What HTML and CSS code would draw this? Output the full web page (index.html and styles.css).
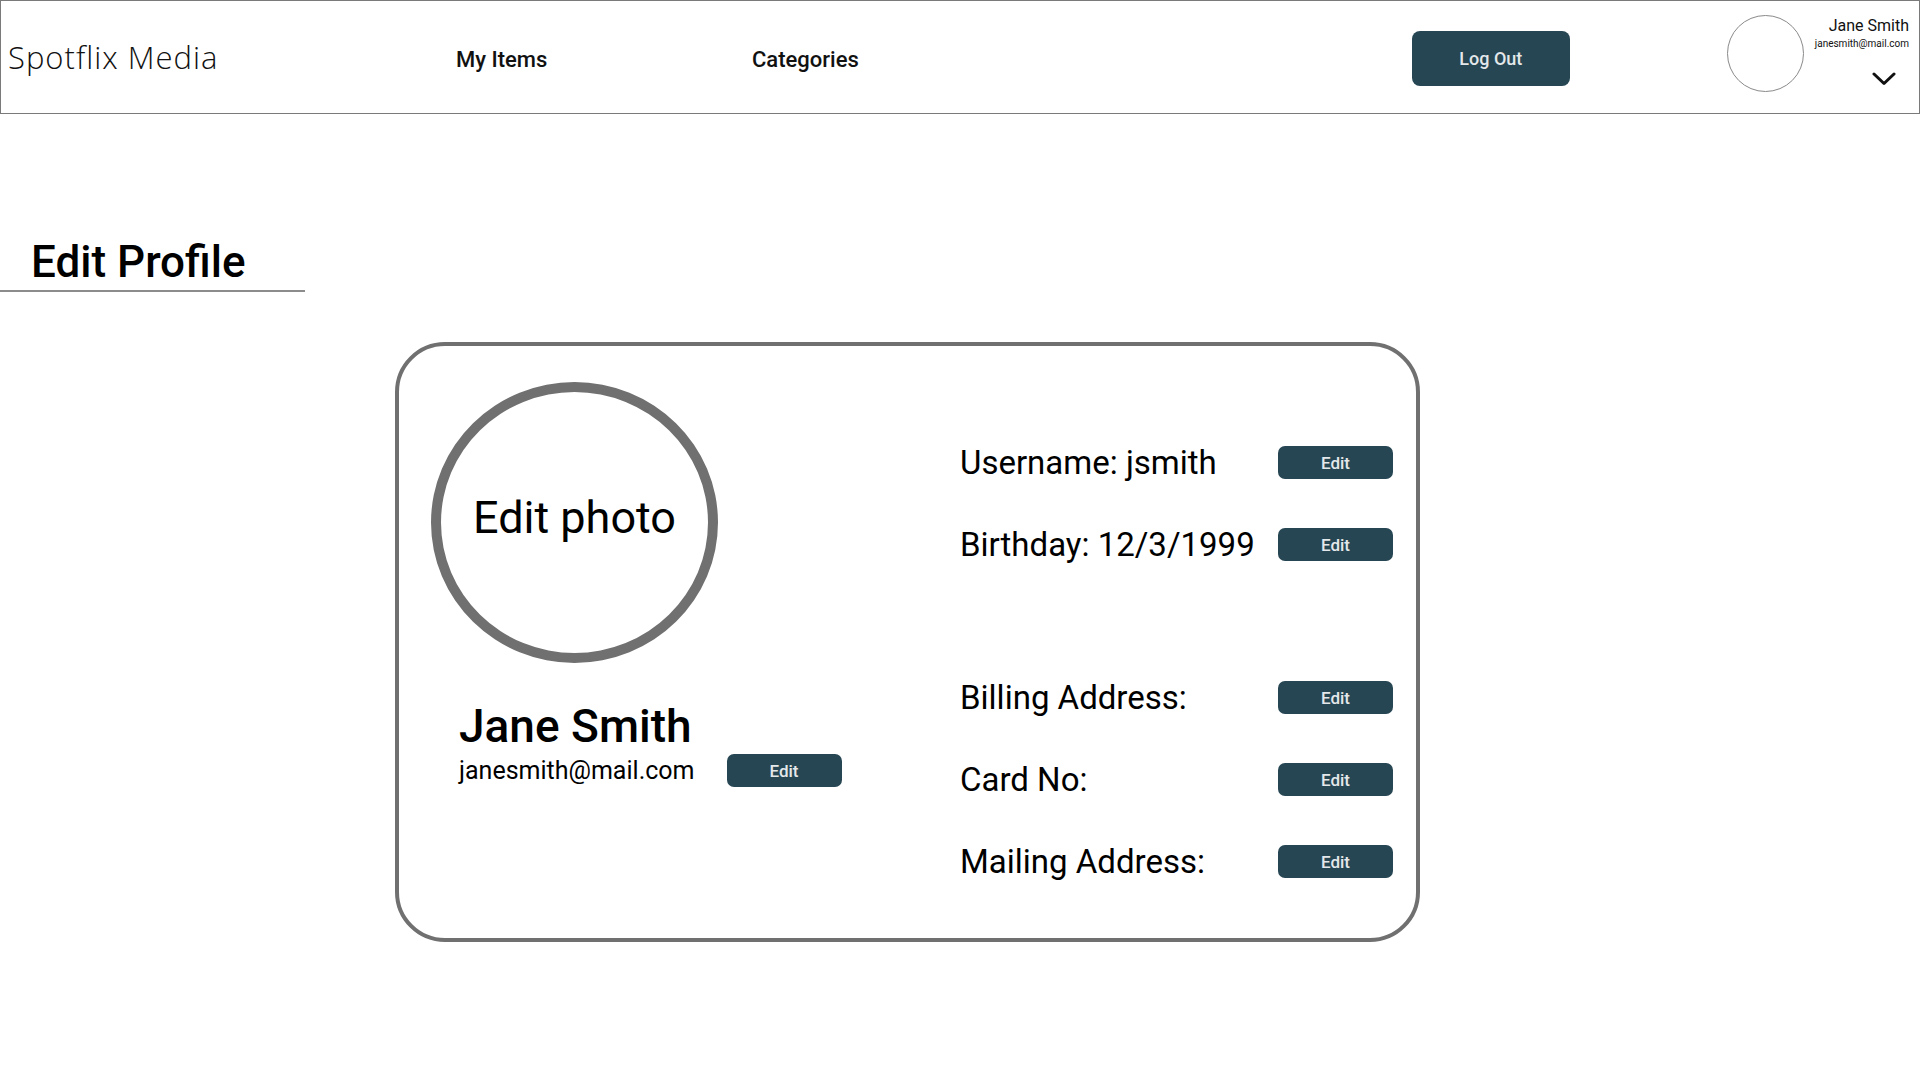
FILE: index.html
```html
<!DOCTYPE html>
<html lang="en">
<head>
<meta charset="utf-8">
<title>Spotflix Media - Edit Profile</title>
<link rel="stylesheet" href="styles.css">
</head>
<body>
<header class="topbar">
  <div class="logo">Spotflix Media</div>
  <nav class="nav">
    <a class="nav-link nav-items" href="#">My Items</a>
    <a class="nav-link nav-cats" href="#">Categories</a>
  </nav>
  <button class="btn btn-logout">Log Out</button>
  <div class="avatar"></div>
  <div class="user">
    <div class="user-name">Jane Smith</div>
    <div class="user-mail">janesmith@mail.com</div>
    <svg class="chevron" width="24" height="14" viewBox="0 0 24 14"><path d="M2 2 L12 11.5 L22 2" fill="none" stroke="#111" stroke-width="3" stroke-linecap="round" stroke-linejoin="round"/></svg>
  </div>
</header>

<main class="main">
  <h1 class="page-title">Edit Profile</h1>

  <section class="card">
    <div class="card-left">
      <div class="photo"><span class="photo-label">Edit photo</span></div>
      <div class="name">Jane Smith</div>
      <div class="mail-row">
        <span class="mail">janesmith@mail.com</span>
        <button class="btn btn-edit">Edit</button>
      </div>
    </div>
    <div class="card-right">
      <div class="field"><span class="field-label">Username: jsmith</span><button class="btn btn-edit">Edit</button></div>
      <div class="field"><span class="field-label">Birthday: 12/3/1999</span><button class="btn btn-edit">Edit</button></div>
      <div class="field field-gap"><span class="field-label">Billing Address:</span><button class="btn btn-edit">Edit</button></div>
      <div class="field"><span class="field-label">Card No:</span><button class="btn btn-edit">Edit</button></div>
      <div class="field"><span class="field-label">Mailing Address:</span><button class="btn btn-edit">Edit</button></div>
    </div>
  </section>
</main>
</body>
</html>
```

FILE: styles.css
```css
* { box-sizing: border-box; }

html, body {
  margin: 0;
  padding: 0;
  background: #ffffff;
  font-family: Roboto, "Liberation Sans", Arial, sans-serif;
  color: #000;
}

.topbar {
  width: 1920px;
  height: 114px;
  border: 1px solid #7a7a7a;
  display: flex;
  align-items: center;
}

.logo {
  font-family: "Open Sans", "Liberation Sans", sans-serif;
  font-weight: 300;
  font-size: 31px;
  letter-spacing: 1px;
  color: #111;
  padding-left: 7px;
  width: 230px;
  white-space: nowrap;
}

.nav {
  display: flex;
  align-items: center;
  margin-left: 225px;
  padding-top: 6px;
}

.nav-link {
  font-size: 22px;
  font-weight: 500;
  color: #111;
  text-decoration: none;
  line-height: 26px;
}

.nav-items { width: 296px; }

.btn {
  font-family: Roboto, "Liberation Sans", sans-serif;
  border: none;
  background: #264653;
  color: #e4e8ea;
  font-weight: 500;
  cursor: pointer;
  padding: 0;
}

.btn-logout {
  width: 158px;
  height: 55px;
  border-radius: 8px;
  font-size: 18px;
  margin-left: 553px;
  margin-top: 3px;
}

.avatar {
  width: 77px;
  height: 77px;
  border-radius: 50%;
  border: 1px solid #8a8a8a;
  margin-left: 157px;
  margin-top: -8px;
}

.user {
  align-self: stretch;
  flex: 1;
  display: flex;
  flex-direction: column;
  align-items: flex-end;
  padding-right: 10px;
  padding-top: 15px;
}

.user-name {
  font-size: 16px;
  line-height: 19px;
  color: #111;
}

.user-mail {
  font-size: 10px;
  line-height: 12px;
  margin-top: 3px;
  color: #111;
}

.chevron {
  margin-top: 22px;
  margin-right: 13px;
}

.main {
  padding-top: 124px;
}

.page-title {
  margin: 0;
  width: 305px;
  padding-left: 31px;
  font-size: 44px;
  font-weight: 500;
  line-height: 49px;
  padding-bottom: 3px;
  border-bottom: 2px solid #8c8c8c;
}

.card {
  margin-top: 50px;
  margin-left: 395px;
  width: 1025px;
  height: 600px;
  border: 4px solid #707070;
  border-radius: 50px;
  display: flex;
}

.card-left {
  width: 561px;
  padding-left: 32px;
  padding-top: 36px;
}

.photo {
  width: 287px;
  height: 281px;
  border-radius: 50%;
  border: 10px solid #707070;
  display: flex;
  align-items: center;
  justify-content: center;
  padding-bottom: 10px;
}

.photo-label {
  font-size: 45px;
  line-height: 52px;
  white-space: nowrap;
}

.name {
  margin-top: 36px;
  margin-left: 28px;
  font-size: 46px;
  font-weight: 500;
  line-height: 54px;
}

.mail-row {
  display: flex;
  align-items: center;
  margin-left: 28px;
  margin-top: 1px;
  gap: 32px;
}

.mail {
  font-size: 25px;
  font-weight: 400;
  line-height: 28px;
}

.btn-edit {
  width: 115px;
  height: 33px;
  border-radius: 7px;
  font-size: 17px;
}

.card-right {
  padding-top: 100px;
  display: flex;
  flex-direction: column;
  gap: 49px;
}

.field {
  display: flex;
  align-items: center;
  height: 33px;
}

.field-gap { margin-top: 71px; }

.field-label {
  width: 318px;
  font-size: 33px;
  font-weight: 400;
  line-height: 38px;
  white-space: nowrap;
}
```
